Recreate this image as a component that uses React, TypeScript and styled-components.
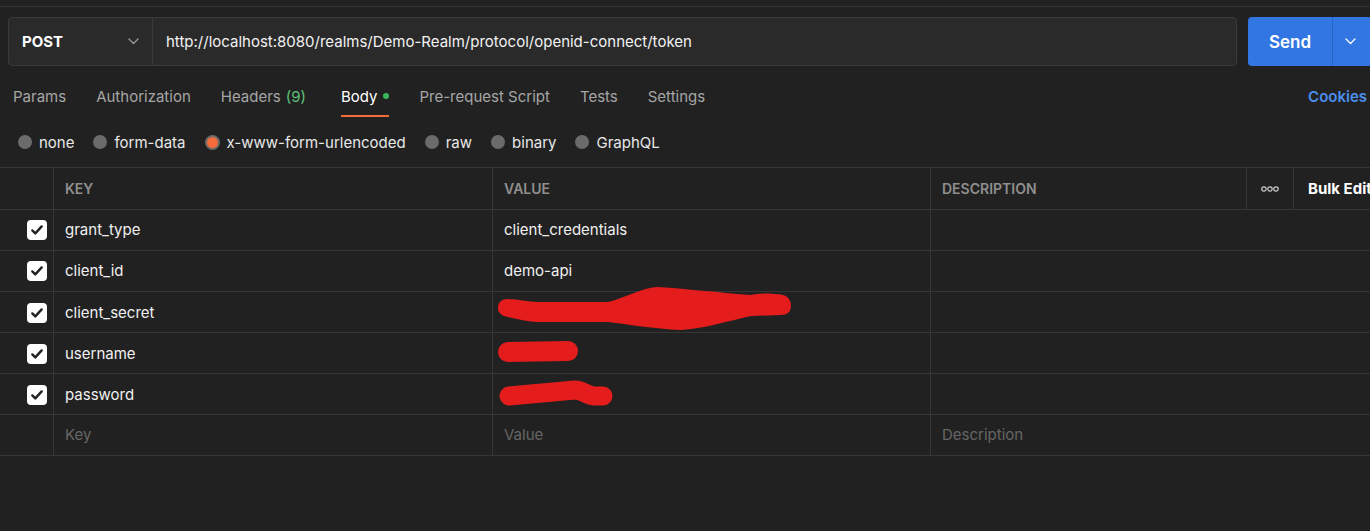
import React from "react";
import styled, { createGlobalStyle } from "styled-components";

const GlobalStyle = createGlobalStyle`
  html, body {
    margin: 0;
    padding: 0;
    background: #212121;
    overflow: hidden;
  }
  body {
    font-family: Inter, "Noto Sans", Arial, sans-serif;
  }
`;

const Page = styled.div`
  width: 1380px;
  height: 531px;
  background: #212121;
  color: #f0f0f0;
  font-size: 15px;
`;

const TopStrip = styled.div`
  height: 6px;
  border-bottom: 1px solid #333333;
`;

const UrlRow = styled.div`
  display: flex;
  gap: 11px;
  padding: 10px 8px 0;
`;

const RequestBar = styled.div`
  flex: 1;
  display: flex;
  height: 49px;
  box-sizing: border-box;
  border: 1px solid #3a3a3a;
  border-radius: 4px;
  background: #2a2a2a;
`;

const MethodSelect = styled.div`
  width: 144px;
  box-sizing: border-box;
  display: flex;
  align-items: center;
  justify-content: space-between;
  padding: 0 13px 0 13px;
  border-right: 1px solid #3a3a3a;
  font-weight: 700;
  font-size: 15px;
  color: #ffffff;
`;

const UrlText = styled.div`
  display: flex;
  align-items: center;
  padding-left: 13px;
  font-size: 15px;
  color: #f2f2f2;
`;

const SendGroup = styled.div`
  display: flex;
  width: 124px;
  height: 49px;
  border-radius: 4px;
  background: #3276e3;
  overflow: hidden;
`;

const SendButton = styled.div`
  width: 84px;
  display: flex;
  align-items: center;
  justify-content: center;
  border-right: 1px solid #2a63c6;
  font-size: 17px;
  font-weight: 600;
  color: #ffffff;
`;

const SendMore = styled.div`
  flex: 1;
  display: flex;
  align-items: center;
  justify-content: center;
  padding-right: 4px;
`;

const TabBar = styled.div`
  display: flex;
  gap: 30px;
  height: 51px;
  box-sizing: border-box;
  padding: 12px 13px 0;
`;

const Tab = styled.div<{ $active?: boolean }>`
  height: 39px;
  box-sizing: border-box;
  display: flex;
  align-items: center;
  padding-bottom: 1px;
  border-bottom: 2px solid ${(p) => (p.$active ? "#f26b3a" : "transparent")};
  color: ${(p) => (p.$active ? "#ffffff" : "#a6a6a6")};
  font-size: 15px;
  white-space: nowrap;
`;

const Count = styled.span`
  color: #5ec27b;
  margin: 0 5px 0 5px;
`;

const ActiveDot = styled.span`
  width: 6px;
  height: 6px;
  border-radius: 50%;
  background: #3cb55a;
  margin-left: 6px;
`;

const CookiesLink = styled(Tab)`
  margin-left: auto;
  color: #4c8ff0;
  font-weight: 600;
`;

const RadioRow = styled.div`
  display: flex;
  align-items: center;
  gap: 19px;
  height: 50px;
  padding-left: 18px;
  box-sizing: border-box;
`;

const RadioItem = styled.div`
  display: flex;
  align-items: center;
  gap: 7px;
  font-size: 15px;
  color: #e8e8e8;
`;

const RadioDot = styled.span<{ $checked?: boolean }>`
  width: ${(p) => (p.$checked ? 15 : 14)}px;
  height: ${(p) => (p.$checked ? 15 : 14)}px;
  box-sizing: border-box;
  border-radius: 50%;
  background: ${(p) => (p.$checked ? "#f26b3a" : "#6b6b6b")};
  border: ${(p) => (p.$checked ? "2px solid #6b6b6b" : "none")};
`;

const Table = styled.div`
  border-top: 1px solid #363636;
`;

const GridRow = styled.div<{ $head?: boolean }>`
  display: grid;
  grid-template-columns: 53px 439px 438px 1fr;
  height: ${(p) => (p.$head ? 42 : 41)}px;
  box-sizing: border-box;
  border-bottom: 1px solid #363636;
`;

const Cell = styled.div<{ $muted?: boolean }>`
  display: flex;
  align-items: center;
  padding: 0 0 1px 11px;
  border-left: 1px solid #363636;
  font-size: 15px;
  color: ${(p) => (p.$muted ? "#666666" : "#f0f0f0")};
  white-space: nowrap;
`;

const CheckCell = styled.div`
  display: flex;
  align-items: center;
  padding-left: 27px;
`;

const CheckBox = styled.span`
  width: 20px;
  height: 20px;
  border-radius: 4px;
  background: #ffffff;
  display: flex;
  align-items: center;
  justify-content: center;
`;

const HeadLabel = styled.div`
  display: flex;
  align-items: center;
  padding-left: 11px;
  border-left: 1px solid #363636;
  font-size: 14px;
  font-weight: 600;
  color: #8f8f8f;
`;

const DescHead = styled.div`
  display: flex;
  border-left: 1px solid #363636;
`;

const DescLabel = styled(HeadLabel)`
  flex: 1;
  border-left: none;
`;

const DotsCell = styled.div`
  width: 46px;
  display: flex;
  align-items: center;
  justify-content: center;
  border-left: 1px solid #363636;
`;

const BulkEdit = styled.div`
  width: 87px;
  box-sizing: border-box;
  display: flex;
  align-items: center;
  padding-left: 14px;
  border-left: 1px solid #363636;
  font-size: 15px;
  font-weight: 700;
  color: #ffffff;
  white-space: nowrap;
  overflow: hidden;
`;

const Scribble = styled.svg`
  display: block;
  flex-shrink: 0;
  margin-left: -11px;
  overflow: visible;
`;

const Chevron = ({ color }: { color: string }) => (
  <svg width="11" height="7" viewBox="0 0 11 7" fill="none">
    <path d="M1 1l4.5 4.5L10 1" stroke={color} strokeWidth="1.3" strokeLinecap="round" strokeLinejoin="round" />
  </svg>
);

const CheckMark = () => (
  <svg width="14" height="14" viewBox="0 0 14 14" fill="none">
    <path d="M2.3 7.4l3 3 6.4-7" stroke="#222222" strokeWidth="2.4" strokeLinecap="round" strokeLinejoin="round" />
  </svg>
);

const Dots = () => (
  <svg width="18" height="6" viewBox="0 0 18 6" fill="none">
    <circle cx="3" cy="3" r="2.2" stroke="#cfcfcf" strokeWidth="1.2" />
    <circle cx="9" cy="3" r="2.2" stroke="#cfcfcf" strokeWidth="1.2" />
    <circle cx="15" cy="3" r="2.2" stroke="#cfcfcf" strokeWidth="1.2" />
  </svg>
);

type Redact = "long" | "short" | "medium";

const RED = "#e41c1c";

const Redaction = ({ kind }: { kind: Redact }) => {
  if (kind === "long") {
    return (
      <Scribble width="310" height="40" viewBox="0 0 310 40">
        <path
          fill={RED}
          d="M5 16 C5 10 9 7 15 7 C25 7 35 10 45 10 L115 10 C135 5 150 -5 165 -5 C195 -3 230 1 258 3 C265 1 280 1 290 3 C296 5 298 9 298 14 C298 20 294 23 288 23 L258 24 C235 29 210 37 188 38 C160 37 135 32 115 30 L45 30 C35 30 25 27 15 25 C9 24 5 21 5 16 Z"
        />
      </Scribble>
    );
  }
  if (kind === "short") {
    return (
      <Scribble width="100" height="40" viewBox="0 0 100 40">
        <path d="M15 19 L75 18" stroke={RED} strokeWidth="20" strokeLinecap="round" fill="none" />
      </Scribble>
    );
  }
  return (
    <Scribble width="130" height="40" viewBox="0 0 130 40">
      <path
        d="M16 22 L82 16 C90 16 94 22 102 22 L110 22"
        stroke={RED}
        strokeWidth="19"
        strokeLinecap="round"
        strokeLinejoin="round"
        fill="none"
      />
    </Scribble>
  );
};

const tabs = ["Params", "Authorization", "Headers", "Body", "Pre-request Script", "Tests", "Settings"];
const bodyTypes = ["none", "form-data", "x-www-form-urlencoded", "raw", "binary", "GraphQL"];

const rows: { key: string; value?: string; redact?: Redact }[] = [
  { key: "grant_type", value: "client_credentials" },
  { key: "client_id", value: "demo-api" },
  { key: "client_secret", redact: "long" },
  { key: "username", redact: "short" },
  { key: "password", redact: "medium" },
];

export default function App() {
  return (
    <Page>
      <GlobalStyle />
      <TopStrip />
      <UrlRow>
        <RequestBar>
          <MethodSelect>
            POST
            <Chevron color="#9a9a9a" />
          </MethodSelect>
          <UrlText>http://localhost:8080/realms/Demo-Realm/protocol/openid-connect/token</UrlText>
        </RequestBar>
        <SendGroup>
          <SendButton>Send</SendButton>
          <SendMore>
            <Chevron color="#ffffff" />
          </SendMore>
        </SendGroup>
      </UrlRow>

      <TabBar>
        {tabs.map((t) => (
          <Tab key={t} $active={t === "Body"}>
            {t}
            {t === "Headers" && <Count>(9)</Count>}
            {t === "Body" && <ActiveDot />}
          </Tab>
        ))}
        <CookiesLink>Cookies</CookiesLink>
      </TabBar>

      <RadioRow>
        {bodyTypes.map((b) => (
          <RadioItem key={b}>
            <RadioDot $checked={b === "x-www-form-urlencoded"} />
            {b}
          </RadioItem>
        ))}
      </RadioRow>

      <Table>
        <GridRow $head>
          <div />
          <HeadLabel>KEY</HeadLabel>
          <HeadLabel>VALUE</HeadLabel>
          <DescHead>
            <DescLabel>DESCRIPTION</DescLabel>
            <DotsCell>
              <Dots />
            </DotsCell>
            <BulkEdit>Bulk Edit</BulkEdit>
          </DescHead>
        </GridRow>
        {rows.map((r) => (
          <GridRow key={r.key}>
            <CheckCell>
              <CheckBox>
                <CheckMark />
              </CheckBox>
            </CheckCell>
            <Cell>{r.key}</Cell>
            <Cell>{r.redact ? <Redaction kind={r.redact} /> : r.value}</Cell>
            <Cell />
          </GridRow>
        ))}
        <GridRow>
          <div />
          <Cell $muted>Key</Cell>
          <Cell $muted>Value</Cell>
          <Cell $muted>Description</Cell>
        </GridRow>
      </Table>
    </Page>
  );
}
